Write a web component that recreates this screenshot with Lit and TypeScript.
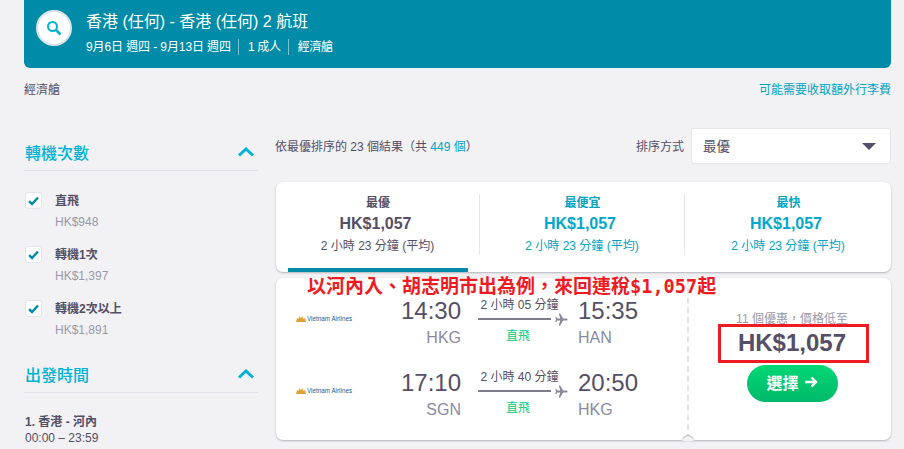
import { LitElement, html, css } from "lit";
import { customElement } from "lit/decorators.js";

const stops = [
  { name: "直飛", price: "HK$948" },
  { name: "轉機1次", price: "HK$1,397" },
  { name: "轉機2次以上", price: "HK$1,891" },
];

const tabs = [
  { name: "最優", active: true },
  { name: "最便宜", active: false },
  { name: "最快", active: false },
];

const legs = [
  { dep: "14:30", from: "HKG", dur: "2 小時 05 分鐘", arr: "15:35", to: "HAN" },
  { dep: "17:10", from: "SGN", dur: "2 小時 40 分鐘", arr: "20:50", to: "HKG" },
];

const chevron = html`<svg class="chev" width="18" height="12" viewBox="0 0 18 12">
  <path d="M2 9.5 L9 3 L16 9.5" fill="none" stroke="#00b2d6" stroke-width="3"/>
</svg>`;

const tick = html`<svg width="11" height="10" viewBox="0 0 11 10">
  <path d="M1 5.2 L4 8 L10 1.5" fill="none" stroke="#008ca8" stroke-width="2.4"/>
</svg>`;

const plane = html`<svg class="plane" width="13" height="13" viewBox="0 0 24 24">
  <path fill="#8a8799" d="M23 12c0-1-1-1.8-2.2-1.8H15L9.5 1H7l2.6 9.2H4.4L2.5 7.6H.6L1.8 12 .6 16.4h1.9l1.9-2.6h5.2L7 23h2.5l5.5-9.2h5.8C22 13.800 23 13 23 12z"/>
</svg>`;

@customElement("app-root")
export class AppRoot extends LitElement {
  static styles = css`
    :host {
      display: block;
      width: 904px;
      height: 449px;
      overflow: hidden;
      position: relative;
      background: #f2f2f5;
      color: #544e66;
      font-family: "Liberation Sans", "Noto Sans CJK TC", sans-serif;
      font-size: 12px;
    }
    * { box-sizing: border-box; }
    .page { padding: 0 13px 0 24px; }

    .banner {
      height: 68px;
      background: #008ca8;
      border-radius: 0 0 6px 6px;
      color: #fff;
      display: flex;
      align-items: flex-start;
      padding: 11px 12px 0 12px;
      gap: 14px;
    }
    .search {
      width: 36px;
      height: 36px;
      border-radius: 50%;
      background: #fff;
      border: 2px solid #d9e3ea;
      display: flex;
      align-items: center;
      justify-content: center;
      margin-top: -1px;
    }
    .banner h1 { margin: 0; font-weight: 400; font-size: 16px; line-height: 22px; }
    .meta { display: flex; align-items: center; margin-top: 6px; font-size: 12px; line-height: 16px; }
    .meta span:first-child { letter-spacing: -0.1px; }
    .meta span + span { border-left: 1px solid #7cc4d4; margin-left: 7px; padding-left: 9px; letter-spacing: -0.3px; }

    .subbar {
      display: flex;
      justify-content: space-between;
      align-items: center;
      height: 40px;
      font-size: 12px;
    }
    .link { color: #00a3c4; }

    .cols { display: grid; grid-template-columns: 234px 615px; column-gap: 18px; margin-top: 20px; }
    aside { padding-top: 1px; }

    .filter-head {
      display: flex;
      justify-content: space-between;
      align-items: center;
      height: 42px;
      padding: 4px 3px 0 1px;
      border-bottom: 1px solid #e0e1e8;
      color: #00b2d6;
      font-size: 16px;
      font-weight: 500;
    }
    .stops { padding-top: 21px; display: flex; flex-direction: column; gap: 16px; margin-bottom: 13px; }
    .stop { display: grid; grid-template-columns: 17px 1fr; column-gap: 13px; padding-left: 1px; height: 38px; }
    .box {
      width: 17px;
      height: 17px;
      background: #fff;
      border: 1px solid #e4e5ec;
      border-radius: 3px;
      display: flex;
      align-items: center;
      justify-content: center;
    }
    .stop b { display: block; font-size: 12px; line-height: 17px; padding-top: 1px; height: 18px; }
    .stop small { display: block; color: #9a98aa; font-size: 12px; line-height: 16px; margin-top: 4px; }
    .slot { margin-top: 21px; padding-left: 1px; line-height: 15px; }
    .slot b { display: block; font-size: 12px; line-height: 16px; }
    .slot span { display: block; line-height: 17px; }

    .sortbar { display: flex; align-items: center; height: 36px; margin-bottom: 18px; }
    .count { flex: 1; margin: -1px 0 0 -1px; }
    .count i { font-style: normal; color: #00a3c4; }
    .sort-label { margin-right: 7px; margin-top: -1px; }
    .select {
      width: 200px;
      height: 36px;
      background: #fff;
      border: 1px solid #e6e7ec;
      border-radius: 3px;
      display: flex;
      align-items: center;
      justify-content: space-between;
      padding: 0 14px 0 11px;
      font-size: 13.500px;
    }
    .select b { font-weight: 400; margin-top: -3px; }
    .caret { width: 0; height: 0; border-left: 7px solid transparent; border-right: 7px solid transparent; border-top: 7px solid #544e66; }

    .tabs {
      height: 90px;
      background: #fff;
      border-radius: 7px;
      box-shadow: 0 1px 2px rgba(60, 60, 80, 0.35);
      display: grid;
      grid-template-columns: 203px 205px 1fr;
      padding-top: 12px;
    }
    .tab { position: relative; height: 61px; text-align: center; padding-top: 1px; color: #00a3c4; }
    .tab + .tab { border-left: 1px solid #e6e7ec; }
    .tab.active { color: #544e66; }
    .tab b { display: block; line-height: 16px; font-size: 12px; padding-left: 1px; }
    .tab strong { display: block; font-size: 16px; line-height: 22px; margin-top: 2px; padding-right: 4px; }
    .tab.active strong { color: #544e66; }
    .tab:not(.active) strong { color: #00a8cc; }
    .tab span { display: block; line-height: 16px; margin-top: 3px; }
    .tab.active::after {
      content: "";
      position: absolute;
      left: 12px;
      bottom: -17px;
      width: 180px;
      height: 4px;
      background: #008ca8;
    }

    .result {
      margin-top: 6px;
      height: 162px;
      background: #fff;
      border-radius: 7px;
      box-shadow: 0 1px 2px rgba(60, 60, 80, 0.35);
      display: grid;
      grid-template-columns: 411px 1fr;
      position: relative;
    }
    .flights { padding-top: 18px; display: flex; flex-direction: column; gap: 14px; }
    .leg { display: grid; grid-template-columns: 117px 68px 117px auto; height: 58px; }
    .carrier { display: flex; align-items: center; padding-left: 20px; gap: 1px; height: 44px; }
    .carrier em { font-family: "Liberation Sans", sans-serif; font-style: normal; font-size: 6.300px; color: #1d5c8c; white-space: nowrap; }
    .time { font-size: 24px; line-height: 30px; color: #544e66; }
    .dep { text-align: right; }
    .code { font-size: 16px; line-height: 18px; color: #8a8aa5; margin-top: 3px; }
    .mid { padding-left: 17px; }
    .dur { line-height: 14px; font-size: 12px; text-align: center; width: 83px; white-space: nowrap; margin-top: 2px; }
    .line { display: flex; align-items: center; gap: 4px; height: 14px; margin-top: 0; }
    .line i { display: block; width: 73px; height: 2px; background: #7f7b8e; }
    .direct { color: #00cc77; text-align: center; width: 80px; line-height: 16px; margin-top: 2px; }

    .buy {
      border-left: 2px dashed #e2e2ec;
      display: flex;
      flex-direction: column;
      align-items: center;
      padding: 33px 0 0 4px;
      position: relative;
    }
    .offer { color: #9a98aa; line-height: 16px; }
    .price { font-size: 24px; font-weight: 700; line-height: 30px; margin-top: 1px; color: #544e66; }
    .pick {
      margin-top: 7px;
      width: 91px;
      height: 37px;
      border-radius: 19px;
      border: 0;
      padding: 0 0 4px;
      color: #fff;
      background: linear-gradient(#00d774, #00b96a);
      display: flex;
      align-items: center;
      justify-content: center;
      gap: 5px;
      font: 700 16px "Liberation Sans", "Noto Sans CJK TC", sans-serif;
    }
    .notch {
      position: absolute;
      left: -7px;
      bottom: -1px;
      width: 12px;
      height: 6px;
      background: #f2f2f5;
      border-radius: 6px 6px 0 0;
      box-shadow: inset 0 1px 1px rgba(60, 60, 80, 0.3);
    }

    .note {
      position: absolute;
      left: 307px;
      top: 272px;
      color: #ed1c24;
      font-family: "Noto Sans CJK TC", sans-serif;
      font-size: 19px;
      font-weight: 700;
      line-height: 26px;
      white-space: nowrap;
    }
    .note span { font-family: "DejaVu Sans Mono", monospace; font-size: 18.600px; }
    .mark { position: absolute; left: 718px; top: 324px; width: 151px; height: 39px; border: 3px solid #ed1c24; }
  `;

  render() {
    return html`
      <div class="page">
        <header class="banner">
          <div class="search">
            <svg width="16" height="16" viewBox="0 0 16 16">
              <circle cx="6.500" cy="6.500" r="4.500" fill="none" stroke="#00b2d6" stroke-width="2"/>
              <path d="M10 10 L14.500 14.500" stroke="#00b2d6" stroke-width="2.500"/>
            </svg>
          </div>
          <div>
            <h1>香港 (任何) - 香港 (任何) 2 航班</h1>
            <div class="meta">
              <span>9月6日 週四 - 9月13日 週四</span><span>1 成人</span><span>經濟艙</span>
            </div>
          </div>
        </header>
        <div class="subbar">
          <span>經濟艙</span>
          <span class="link">可能需要收取額外行李費</span>
        </div>
        <div class="cols">
          <aside>
            <div class="filter-head">轉機次數 ${chevron}</div>
            <div class="stops">
              ${stops.map(
                (s) => html`<div class="stop">
                  <div class="box">${tick}</div>
                  <div><b>${s.name}</b><small>${s.price}</small></div>
                </div>`
              )}
            </div>
            <div class="filter-head">出發時間 ${chevron}</div>
            <div class="slot"><b>1. 香港 - 河內</b><span>00:00 – 23:59</span></div>
          </aside>
          <main>
            <div class="sortbar">
              <div class="count">依最優排序的 23 個結果（共 <i>449 個</i>）</div>
              <div class="sort-label">排序方式</div>
              <div class="select"><b>最優</b><span class="caret"></span></div>
            </div>
            <div class="tabs">
              ${tabs.map(
                (t) => html`<div class="tab ${t.active ? "active" : ""}">
                  <b>${t.name}</b>
                  <strong>HK$1,057</strong>
                  <span>2 小時 23 分鐘 (平均)</span>
                </div>`
              )}
            </div>
            <section class="result">
              <div class="flights">
                ${legs.map(
                  (l) => html`<div class="leg">
                    <div class="carrier">
                      <svg width="10" height="7" viewBox="0 0 10 7">
                        <path fill="#d9a431" d="M0 7 L1 3 L2.500 4 L3.500 1 L5 3.500 L6.500 1 L7.500 4 L9 3 L10 7 Z"/>
                      </svg>
                      <em>Vietnam Airlines</em>
                    </div>
                    <div class="dep">
                      <div class="time">${l.dep}</div>
                      <div class="code">${l.from}</div>
                    </div>
                    <div class="mid">
                      <div class="dur">${l.dur}</div>
                      <div class="line"><i></i>${plane}</div>
                      <div class="direct">直飛</div>
                    </div>
                    <div class="arr">
                      <div class="time">${l.arr}</div>
                      <div class="code">${l.to}</div>
                    </div>
                  </div>`
                )}
              </div>
              <div class="buy">
                <div class="offer">11 個優惠，價格低至</div>
                <div class="price">HK$1,057</div>
                <button class="pick">
                  選擇
                  <svg width="14" height="12" viewBox="0 0 14 12">
                    <path d="M1 6 H12 M7.500 1.500 L12 6 L7.500 10.500" fill="none" stroke="#fff" stroke-width="2.400"/>
                  </svg>
                </button>
                <div class="notch"></div>
              </div>
            </section>
          </main>
        </div>
      </div>
      <div class="note">以河內入、胡志明市出為例，來回連稅<span>$1,057</span>起</div>
      <div class="mark"></div>
    `;
  }
}
